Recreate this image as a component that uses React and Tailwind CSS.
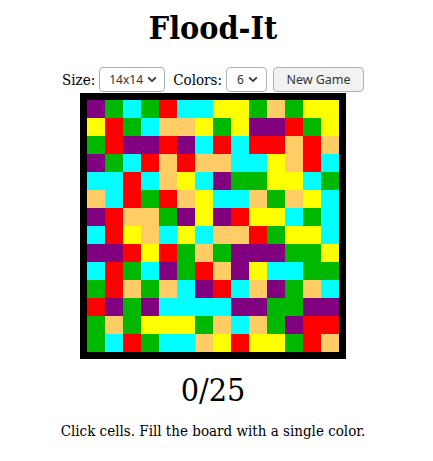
import React from 'react';

// color keys for the board
const C = {
  p: 'bg-[#800080]',
  g: 'bg-[#00b800]',
  c: 'bg-[#00ffff]',
  r: 'bg-[#ff0000]',
  o: 'bg-[#ffcc66]',
  y: 'bg-[#ffff00]',
};

const ROWS = [
  'pgcgrccyygogyy',
  'yrgcooygypprgy',
  'grpprpcrcrroro',
  'pgcrorooccyorc',
  'ccrcoycpggyycg',
  'ocrgroyccogoyc',
  'proogpypryycgc',
  'cryocycoorgyyc',
  'ppryrgogpppggy',
  'crgcpgropyccgg',
  'grogocprcopgoc',
  'rpgpccccppggpp',
  'gogyyygocogprr',
  'gcrgccoyryygro',
];

const Chevron = () => (
  <svg width="10" height="7" viewBox="0 0 10 7" className="pointer-events-none">
    <path d="M1.2 1.5l3.8 3.6 3.8-3.6" fill="none" stroke="#3a3a3a" strokeWidth="1.8" />
  </svg>
);

const FakeSelect = ({ value, className }) => (
  <div
    className={`flex h-[25px] items-center rounded-[4px] border border-[#b0b0b0] bg-white text-[12px] leading-[normal] text-[#333] font-['Noto_Sans',sans-serif] ${className}`}
  >
    <span>{value}</span>
    <span className="ml-[4px] flex items-center">
      <Chevron />
    </span>
  </div>
);

export default function App() {
  return (
    <div className="flex w-[426px] flex-col items-center text-black font-['DejaVu_Serif_Condensed','DejaVu_Serif',serif] [font-stretch:condensed]">
      <h1 className="mt-[9px] text-[32px] font-bold leading-[normal]">Flood-It</h1>

      <div className="mt-[20px] flex h-[25px] items-center text-[15px] leading-[normal]">
        <span className="mr-[4px]">Size:</span>
        <FakeSelect value="14x14" className="w-[66px] pl-[9px]" />
        <span className="ml-[8px] mr-[4px]">Colors:</span>
        <FakeSelect value="6" className="w-[41px] pl-[10px]" />
        <button className="ml-[6px] h-[25px] w-[91px] rounded-[4px] border border-[#b0b0b0] bg-[#f2f2f2] text-[12.5px] leading-[normal] text-[#333] font-['Noto_Sans',sans-serif]">
          New Game
        </button>
      </div>

      <div className="mt-[1px] border-[7px] border-black">
        <div className="grid grid-cols-[repeat(14,18px)]">
          {ROWS.map((row, i) =>
            row.split('').map((k, j) => (
              <div key={`${i}-${j}`} className={`h-[18px] w-[18px] ${C[k]}`} />
            ))
          )}
        </div>
      </div>

      <div className="mt-[12px] text-[32px] leading-[normal]">0/25</div>
      <p className="mt-[13px] text-[15px] leading-[normal]">
        Click cells. Fill the board with a single color.
      </p>
    </div>
  );
}
